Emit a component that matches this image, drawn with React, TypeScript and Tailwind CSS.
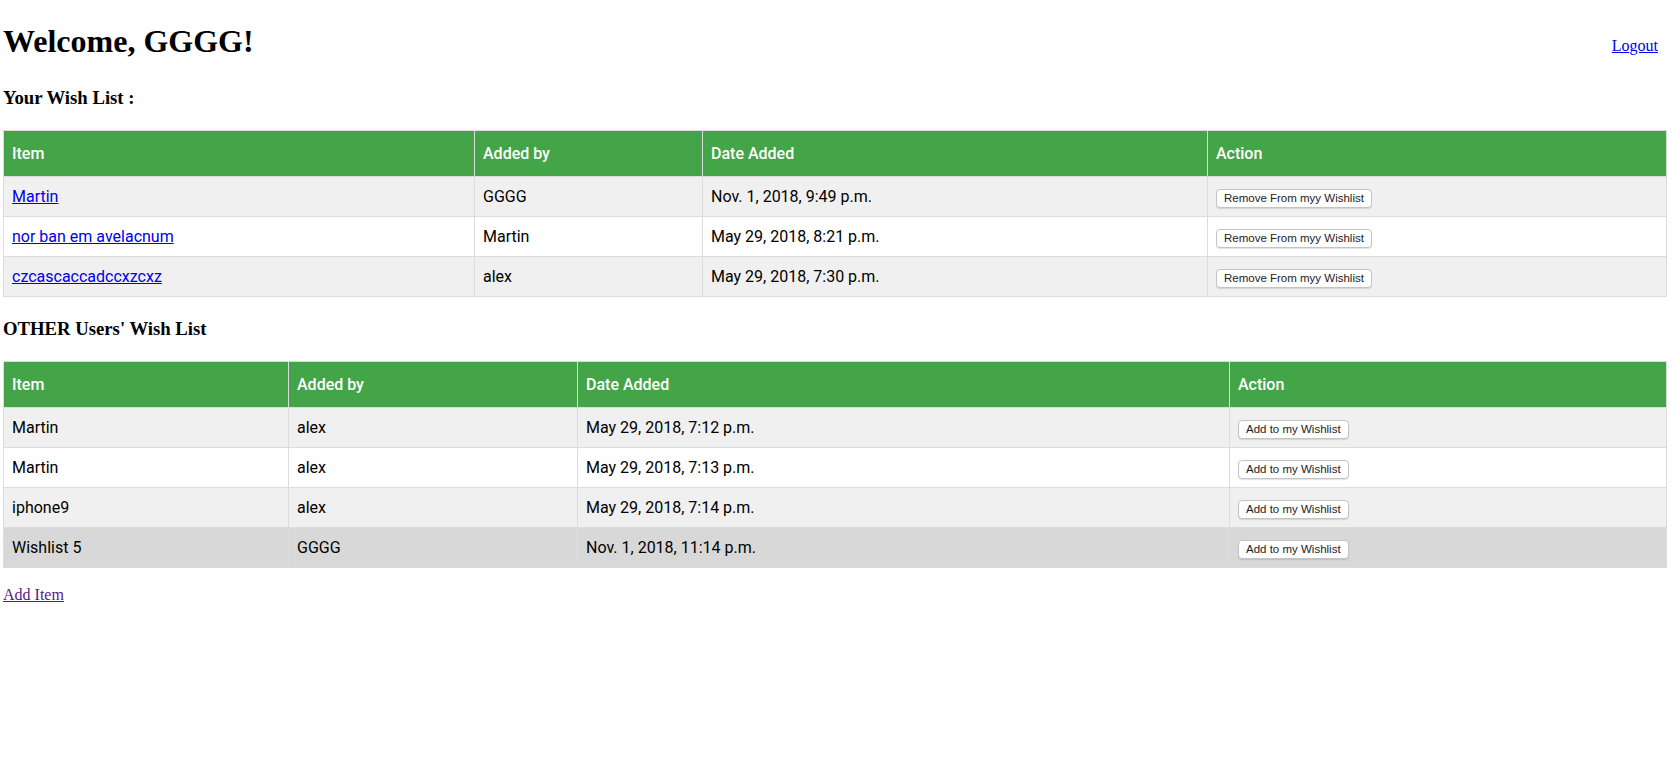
const mine = [
  { item: "Martin", by: "GGGG", date: "Nov. 1, 2018, 9:49 p.m." },
  { item: "nor ban em avelacnum", by: "Martin", date: "May 29, 2018, 8:21 p.m." },
  { item: "czcascaccadccxzcxz", by: "alex", date: "May 29, 2018, 7:30 p.m." },
];

const others = [
  { item: "Martin", by: "alex", date: "May 29, 2018, 7:12 p.m." },
  { item: "Martin", by: "alex", date: "May 29, 2018, 7:13 p.m." },
  { item: "iphone9", by: "alex", date: "May 29, 2018, 7:14 p.m." },
  { item: "Wishlist 5", by: "GGGG", date: "Nov. 1, 2018, 11:14 p.m." },
];

function rowBg(index: number, hovered: boolean) {
  if (hovered) return "bg-[#d8d8d8]";
  return index % 2 === 0 ? "bg-[#f0f0f0]" : "bg-white";
}

function SmallButton({ children }: { children: string }) {
  return (
    <button
      type="button"
      className="h-[19px] rounded-[4px] border border-[#c4c4c4] bg-white px-[7px] font-['Liberation_Sans',Arial,sans-serif] text-[11.5px] leading-none text-[#222] shadow-[0_1px_1px_rgba(0,0,0,.12)]"
    >
      {children}
    </button>
  );
}

function HeaderRow({ widths }: { widths: string[] }) {
  const labels = ["Item", "Added by", "Date Added", "Action"];
  return (
    <tr>
      {labels.map((label, i) => (
        <th
          key={label}
          className={`${widths[i]} h-[46px] border border-[#dcdcdc] bg-[#44a548] px-2 text-left font-medium text-white`}
        >
          {label}
        </th>
      ))}
    </tr>
  );
}

export default function App() {
  return (
    <div className="min-h-screen bg-white px-[3px] font-['Liberation_Serif','Times_New_Roman',serif] text-black">
      <div className="flex items-start justify-between">
        <h1 className="mt-[23px] text-[32px] leading-[37px] font-bold">Welcome, GGGG!</h1>
        <a href="#" className="mt-[34px] mr-[11px] text-base text-[#0000ee] underline">
          Logout
        </a>
      </div>

      <h3 className="mt-[27px] text-[18.72px] leading-[22px] font-bold">Your Wish List :</h3>

      <table className="mt-[21px] w-[1663px] table-fixed border-collapse font-['Roboto',sans-serif] text-base">
        <thead>
          <HeaderRow widths={["w-[471px]", "w-[228px]", "w-[505px]", "w-[459px]"]} />
        </thead>
        <tbody>
          {mine.map((row, index) => (
            <tr key={row.item} className={rowBg(index, false)}>
              <td className="h-[40px] border border-[#dcdcdc] px-2">
                <a href="#" className="text-[#0000ee] underline">
                  {row.item}
                </a>
              </td>
              <td className="border border-[#dcdcdc] px-2">{row.by}</td>
              <td className="border border-[#dcdcdc] px-2">{row.date}</td>
              <td className="border border-[#dcdcdc] px-2">
                <SmallButton>Remove From myy Wishlist</SmallButton>
              </td>
            </tr>
          ))}
        </tbody>
      </table>

      <h3 className="mt-[21px] text-[18.72px] leading-[22px] font-bold">OTHER Users' Wish List</h3>

      <table className="mt-[21px] w-[1663px] table-fixed border-collapse font-['Roboto',sans-serif] text-base">
        <thead>
          <HeaderRow widths={["w-[285px]", "w-[289px]", "w-[652px]", "w-[437px]"]} />
        </thead>
        <tbody>
          {others.map((row, index) => (
            <tr key={row.date} className={rowBg(index, index === 3)}>
              <td className="h-[40px] border border-[#dcdcdc] px-2">{row.item}</td>
              <td className="border border-[#dcdcdc] px-2">{row.by}</td>
              <td className="border border-[#dcdcdc] px-2">{row.date}</td>
              <td className="border border-[#dcdcdc] px-2">
                <SmallButton>Add to my Wishlist</SmallButton>
              </td>
            </tr>
          ))}
        </tbody>
      </table>

      <a href="#" className="mt-[15px] inline-block text-base text-[#551a8b] underline">
        Add Item
      </a>
    </div>
  );
}
